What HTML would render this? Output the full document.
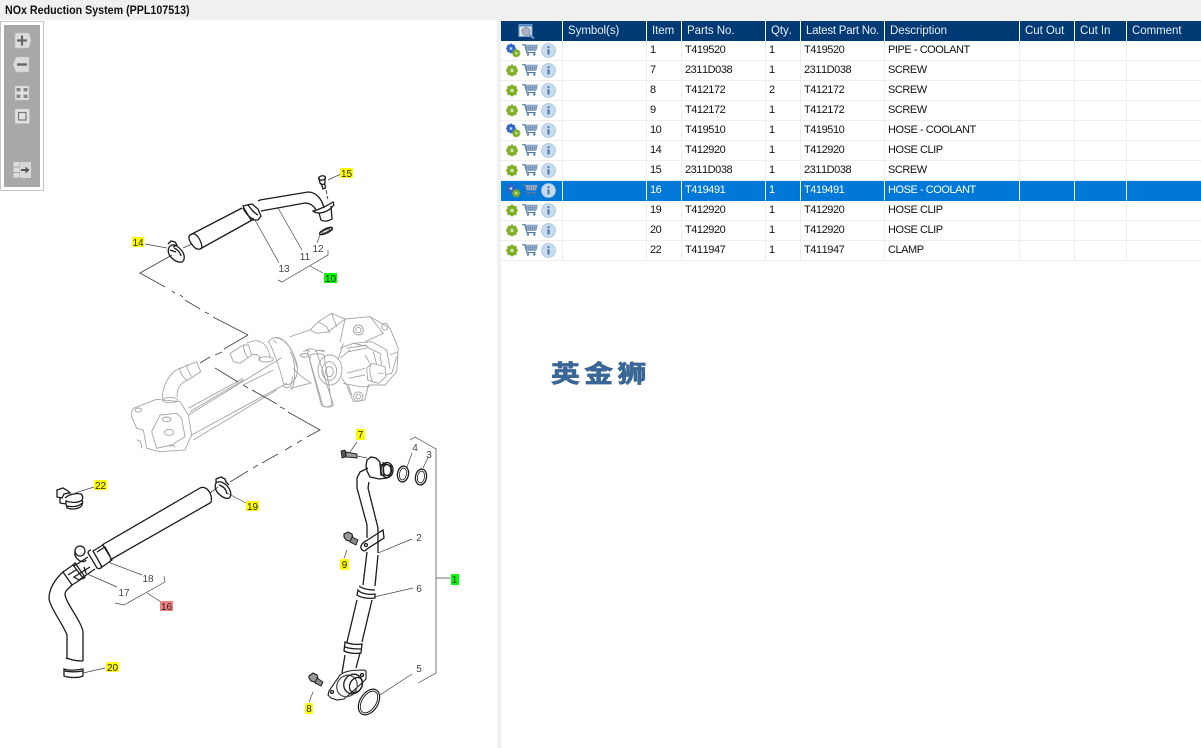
<!DOCTYPE html>
<html><head><meta charset="utf-8"><style>
html,body{margin:0;padding:0;width:1201px;height:748px;overflow:hidden;background:#fff;font-family:"Liberation Sans",sans-serif}
.abs{position:absolute}
#title{left:0;top:0;width:1201px;height:20px;background:#f0f0f0}
#title span{position:absolute;left:5px;top:0;font-weight:bold;font-size:12px;line-height:20px;color:#111;transform:scaleX(.89);transform-origin:left top;white-space:nowrap}
#div{left:497px;top:20px;width:4px;height:728px;background:#f0f0f0}
#top2{left:497px;top:20px;width:704px;height:1px;background:#f0f0f0}
table{position:absolute;left:501px;top:21px;width:700px;border-collapse:separate;border-spacing:0;table-layout:fixed;font-size:11px;letter-spacing:-.45px;font-kerning:none;color:#111}
th{height:20px;padding:0 0 0 5px;background:#003a75;color:#e8eef5;font-weight:normal;font-size:11.5px;letter-spacing:-.05px;text-align:left;border-right:1px solid #fff;box-sizing:border-box;line-height:20px;white-space:nowrap;overflow:hidden}
td{height:20px;padding:0 0 0 3px;border-right:1px solid #eee;border-bottom:1px solid #eee;box-sizing:border-box;white-space:nowrap;overflow:hidden;line-height:19px}
tr.s td{background:#0078d7;color:#fff;border-right-color:#fff;border-bottom-color:#0078d7}
td.i{padding:0;position:relative}
td.i svg{position:absolute;left:3px;top:0}
th:last-child,td:last-child{border-right:none}
#logo{left:551px;top:359px;font-family:"Liberation Sans","Noto Sans CJK SC",sans-serif;font-weight:bold;font-size:24px;line-height:32px;color:#3a6797;letter-spacing:3.7px;transform:scaleX(1.2);transform-origin:left top;-webkit-text-stroke:.7px #3a6797;white-space:nowrap}
</style></head><body>
<svg width="0" height="0" style="position:absolute"><defs>
<symbol id="cart" viewBox="0 0 18 16"><path d="M0 2.500h3l2.500 9h10" fill="none" stroke="#52779f" stroke-width="1.300"/><path d="M3.800 3h13.700l-1.600 6H5.400z" fill="#a9bed4" stroke="#6c8cb0" stroke-width=".8"/><path d="M7 3.500v5M9.500 3.500v5M12 3.500v5M14.500 3.500v5M4.500 5.500h12.500M5 7.500h11.500" stroke="#52779f" stroke-width=".5"/><circle cx="6.700" cy="13.700" r="1.400" fill="#52779f"/><circle cx="14" cy="13.700" r="1.400" fill="#52779f"/></symbol>
<symbol id="info" viewBox="0 0 15 15"><circle cx="7.500" cy="7.500" r="7" fill="#c8dcee" stroke="#a9c4dc" stroke-width=".8"/><rect x="6.400" y="6.300" width="2.200" height="5.200" fill="#4f7dab"/><rect x="6.400" y="3.200" width="2.200" height="2" fill="#4f7dab"/></symbol>
<symbol id="gear" viewBox="0 0 12 12"><circle cx="6" cy="6" r="3.700" fill="none" stroke="#7fae2a" stroke-width="3"/><path d="M6 .1v11.800M.1 6h11.800M1.800 1.800l8.400 8.400M10.200 1.800l-8.400 8.400" stroke="#7fae2a" stroke-width="2.200"/><circle cx="6" cy="6" r="1.700" fill="#d4e6a8"/></symbol>
<symbol id="bgear" viewBox="0 0 12 12"><circle cx="6" cy="6" r="3.700" fill="none" stroke="#2f66c8" stroke-width="3"/><path d="M6 .1v11.800M.1 6h11.800M1.800 1.800l8.400 8.400M10.200 1.800l-8.400 8.400" stroke="#2f66c8" stroke-width="2.200"/><circle cx="6" cy="6" r="1.700" fill="#bcd0f2"/></symbol>
<g id="ic1"><use href="#gear" x="2" y="3.500" width="12" height="12"/><use href="#cart" x="18" y="1.500" width="16" height="14"/><use href="#info" x="37" y="2" width="15" height="15"/></g>
<g id="ic2"><use href="#bgear" x="2" y="2.500" width="10" height="10"/><use href="#gear" x="8" y="8" width="8.500" height="8.500"/><use href="#cart" x="18" y="1.500" width="16" height="14"/><use href="#info" x="37" y="2" width="15" height="15"/></g>
</defs></svg>

<div id="title" class="abs"><span>NOx Reduction System (PPL107513)</span></div>
<div id="div" class="abs"></div><div id="top2" class="abs"></div>

<svg class="abs" style="left:0;top:20px" width="497" height="728" viewBox="0 20 497 728">
<!-- toolbar -->
<rect x="0.500" y="21.500" width="43" height="169" fill="#fff" stroke="#c4c4c4"/>
<rect x="4" y="25" width="36" height="162" fill="#a8a8a8"/>
<path d="M15 33h14l2 7.500-2 7.500H15z" fill="#dcdcdc" stroke="#bdbdbd" stroke-width=".6"/><path d="M22 35.500v10M17 40.500h10" stroke="#666" stroke-width="2.200"/>
<path d="M29 57H16l-3 7.500 3 7.500h13z" fill="#dcdcdc" stroke="#bdbdbd" stroke-width=".6"/><path d="M17 64.500h10" stroke="#666" stroke-width="2.400"/>
<rect x="15" y="86" width="14" height="14" fill="#e2e2e2" stroke="#bdbdbd" stroke-width=".6"/><path d="M16.500 88h4v3.500h-4zM23.500 88h4v3.500h-4zM16.500 94.500h4v3.500h-4zM23.500 94.500h4v3.500h-4z" fill="#888"/>
<rect x="15" y="109" width="14.500" height="14.500" fill="#e2e2e2" stroke="#bdbdbd" stroke-width=".6"/><rect x="18.500" y="112.500" width="7.500" height="7.500" fill="none" stroke="#777" stroke-width="1.200"/>
<rect x="13.500" y="162" width="6" height="4.500" fill="#ddd"/><rect x="13.500" y="167.500" width="6" height="4.500" fill="#ddd"/><rect x="13.500" y="173" width="6" height="4.500" fill="#ddd"/>
<rect x="20" y="162" width="11" height="16" fill="#d8d8d8"/><path d="M21 170h5" stroke="#555" stroke-width="2"/><path d="M25.500 166.500l4 3.500-4 3.500z" fill="#555"/>

<!-- engine left part, coordinates from 3x trace -->
<g transform="translate(120,300) scale(.33333)" fill="none" stroke="#a4a4a4" stroke-width="2.700">
<path d="M35 335l5-10 70-27 70 7 25 40 10 60-5 10-15 35-75 5-40-10-10-55-20-5-15-35z"/>
<path d="M120 345l50-5 15 15 10 55-40 25-45 10-15-50z"/>
<ellipse cx="55" cy="330" rx="10" ry="6"/><ellipse cx="140" cy="358" rx="13" ry="7"/><ellipse cx="147" cy="397" rx="14" ry="9"/>
<path d="M50 420c10 0 15 8 15 25M150 440c5-6 12-6 15 2"/>
<path d="M205 345l280-172M205 325l165-90M210 335l160-95M215 405l285-155M370 255l90-45M220 420l250-150"/>
<ellipse cx="150" cy="300" rx="22" ry="8"/>
<path d="M128 295c-3-35 22-80 52-90M172 292c-4-25 10-45 33-52"/>
<path d="M180 205l50-20 12 30-37 25c-10 2-25-20-25-35zM200 192c0 15 10 30 15 38"/>
<path d="M330 160l40-25 15 0 10 30-35 25-20-5zM370 135c0 15 10 35 15 40"/>
<path d="M380 130c30-15 60-10 70 40M395 165c15-5 25 0 25 15"/>
<ellipse cx="438" cy="178" rx="22" ry="8"/>
<path d="M445 125c25-30 65-5 85 65 10 40-15 75-40 60-5-30-35-115-45-125zM455 115c35-10 65 30 75 85M488 255c5 10 20 10 25 0l5-25"/>
<path d="M520 205c20 25 40 35 55 45M470 130l-10-10"/>
<path d="M560 150c5-5 25-5 30 5l50 160c-5 8-30 8-32 0L565 165zM550 155c5-5 15-5 20 0M585 155c5-5 15-5 25 0"/>
</g>
<!-- engine right part -->
<g transform="translate(290,305) scale(.33333)" fill="none" stroke="#a4a4a4" stroke-width="2.700">
<path d="M0 95l60-20 25-25 40-25 40 17 75-7 60 35 25 60-5 70-35 40-50 0-10 45-35 5-20-50-15-20"/>
<path d="M60 75l20 10 35-5 50-38M85 50l25 15 10 20M125 25l15 40M165 42l-15 70M240 35l40 50 -55 25"/>
<ellipse cx="120" cy="195" rx="36" ry="45"/><ellipse cx="118" cy="198" rx="22" ry="28"/><ellipse cx="118" cy="200" rx="12" ry="15"/>
<path d="M60 150c10-5 35-5 42 0l24 150c-8 8-25 8-32 0L60 170zM30 150c8-6 20-6 25 0 0 8-20 10-25 0zM75 140c8-6 25-6 30 0"/>
<path d="M0 140c15 20 20 80 5 115M0 250l60-15"/>
<circle cx="205" cy="75" r="15"/><circle cx="205" cy="75" r="8"/><circle cx="205" cy="275" r="14"/><circle cx="205" cy="275" r="7"/><circle cx="285" cy="65" r="10"/>
<path d="M150 130l40-15 55-5 45 25 10 55M160 115l-15 45M170 130l60-10M175 140l60-12 40 20M150 160l30-25M190 115l45 10"/>
<path d="M230 190l15-15 40 10 3 30-22 20-33-10zM245 175c-10 15-5 50 8 58M265 205h15M225 150l15 25M250 140l10 40M270 150l5 30"/>
<path d="M170 205l55-15M175 220l50-10M160 235l50 10 30 0M285 210l20-5 15-50M300 150l25-10"/>
<path d="M175 240l10 30M235 240l-5 20"/>
</g>

<!-- dash lines -->
<g fill="none" stroke="#444" stroke-width=".9">
<path d="M172 255l-32 18 25 14M172 291l3 2M180 295l3 2M185 300l15 9M205 312l4 2M213 317l35 18"/>
<path d="M248 335l-24 14M222 352l-7 3M210 357l-10 6"/>
<path d="M215 368l23 14M243 385l5 3M252 390l25 14M280 407l5 2M288 412l32 18-13 7M302 440l-5 3M292 446l-7 4M278 454l-16 9M258 465l-5 3M248 471l-18 11"/>
<path d="M183 248l9-4M210 493l8-6"/>
</g>

<!-- upper hose -->
<g fill="none" stroke="#1c1c1c" stroke-width="1.300">
<path d="M190 235l52-27M200 249l54-30"/>
<path d="M190 235c3-2 6-1 8 2 3 4 5 10 3 12M190 235c-2 2-1 5 1 8 3 5 6 7 9 6"/>
<path d="M243 206l9-2 6 5 3 7-3 4-7 0-6-10z"/>
<path d="M243 208c2 4 6 10 11 11M248 205c3 4 6 8 10 10"/>
<path d="M258 201l2-1 48-8c8 0 14 7 16 16M261 211l44-8c5 0 9 3 11 7"/>
<path d="M313 211c5-1 14-5 20-9 1 1 1 3 0 4-4 5-10 7-14 7-3 0-5-1-6-2z"/>
<path d="M319 213l2 7c3 2 8 1 11-1l-1-13"/>
<ellipse cx="322" cy="178" rx="3.500" ry="2.200" transform="rotate(-10 322 178)"/>
<path d="M319 178l1 5c1 2 4 2 5 0l0-5M321 183l2 6 2.500-1-1-5"/>
<path d="M326 190l1 4M327 196l1 3" stroke-width=".8"/>
<ellipse cx="326" cy="231" rx="7" ry="2.200" transform="rotate(-25 326 231)" stroke-width="1.500"/>
<ellipse cx="326" cy="231" rx="4.500" ry="1" transform="rotate(-25 326 231)" stroke-width=".7"/>
<!-- clamp 14 -->
<path d="M172 245c-4 1-5 7-2 11 3 4 8 7 12 6 3-2 3-7 0-11-3-4-7-7-10-6z"/>
<path d="M168 244l3-3 4 1 2 3-4 2M174 248c3 1 6 4 7 8M170 250l6 2"/>
</g>
<!-- leaders upper -->
<g fill="none" stroke="#444" stroke-width=".7">
<path d="M341 174l-13 6M145 244l22 4M278 208l24 42M255 220l24 43M320 235l-3 8M278 280l4 2 46-27 0-5M310 266l13 7"/>
</g>

<!-- lower-left -->
<g fill="none" stroke="#1c1c1c" stroke-width="1.300">
<path d="M102 545l98-57M110 560l100-57M200 488c4-2 8 1 10 5 2 4 2 9 0 10"/>
<path d="M93 551l10-6 9 15-10 7z"/><path d="M97 552l8-5 5 9"/>
<path d="M91 550c-2 0-3 2-3 3l9 15c2 1 5 1 4-2"/>
<path d="M88 557l-14 9M90 567l-16 10 5 3 16-11M84 567l2 6"/>
<circle cx="80" cy="551" r="5"/><path d="M75 552c-1 4 2 7 5 9 3 1 5 1 6-1"/>
<path d="M63 572l10-7 10 13-11 7z"/><path d="M73 565l2-2 10 14-2 2M68 575l8-5"/>
<path d="M64 571c-9 8-15 18-15 27 0 8 15 28 18 37v23l-1 1"/>
<path d="M72 585c-4 4-7 6-7 9 0 8 17 28 18 38v29"/>
<path d="M67 658c4 2 11 3 16 3"/>
<path d="M64 669c5 2 14 1 19 0l0 7c-4 2-14 2-19 0z"/><path d="M64 671c6 1 13 1 19 0"/>
<!-- clamp 22 -->
<path d="M57 490l6-2 5 3 2 2-6 1-2 4-5-1z"/><path d="M60 498v5l6 1 0-3c5 2 13 2 16-1 1-2 1-5-1-6-4-1-12 0-16 4M66 504l1 4c5 2 13 1 15-3 1-2 1-3 0-5M66 506c6 1 13 1 16-3"/>
<!-- clamp 19 -->
<path d="M216 483c-2 4 0 9 4 12 3 3 7 4 9 3 3-2 2-7-1-11-3-4-9-7-12-4z"/><path d="M216 483l-0-4 5-2 4 2 1 3 3 3M219 485c4 1 7 4 8 9"/>
</g>
<g fill="none" stroke="#444" stroke-width=".7">
<path d="M75 493l19-6M227 493l19 10M108 562l34 13M85 573l32 14M83 673l22-5"/>
<path d="M115 603l9 2 41-23-1-6M147 593l14 9"/>
</g>

<!-- right pipe -->
<g fill="none" stroke="#1c1c1c" stroke-width="1.300">
<path d="M368 468l-8 4-3 6v10l10 37v13M369 482l-1 6 10 40v25"/>
<path d="M367 552l-4 33M378 555l-3 31"/>
<path d="M366 541l17-11 1 8-17 11c-2 3-5 2-6-1-1-2 2-6 5-7z"/><circle cx="366" cy="545" r="1.500"/>
<path d="M358 590c3 4 12 5 17 4l0 4c-5 1-14 0-18-3zM359 586c4 3 11 4 16 4"/>
<path d="M357 600l-10 42M372 600l-10 42"/>
<path d="M345 642c4 2 12 3 17 2l-1 9c-5 1-13 0-17-2zM345 647c5 2 12 2 16 2"/>
<path d="M345 655l-3 18M360 653l-4 15"/>
<path d="M328 695l1-4 11-16c5-4 12-5 24-5l2 1 0 8-4 4-18 16-7 1-6-2z" stroke-width="1.100"/>
<circle cx="332" cy="692" r="1.500"/><circle cx="362" cy="675" r="1.500"/>
<ellipse cx="347" cy="686" rx="10" ry="11" transform="rotate(30 347 686)" stroke="#555"/>
<ellipse cx="353" cy="684" rx="9" ry="10" transform="rotate(30 353 684)"/>
<ellipse cx="356" cy="685" rx="6" ry="8" transform="rotate(30 356 685)"/>
<ellipse cx="369" cy="702" rx="9" ry="14" transform="rotate(32 369 702)" stroke-width="1.200"/>
<ellipse cx="369" cy="702" rx="7" ry="12" transform="rotate(32 369 702)" stroke-width=".9"/>
<!-- top fitting -->
<path d="M367 460l4-3 5 1 4 4 0 3 6-1 5 2 1 8-5 4-8 1-4-1-5-1-3-6-1-5z"/>
<ellipse cx="387" cy="470" rx="6" ry="7.500"/><ellipse cx="387" cy="470" rx="4" ry="5.500"/>
<path d="M380 463l1 13M383 462l1 14"/>
<ellipse cx="403" cy="474" rx="5.500" ry="8" transform="rotate(10 403 474)"/><ellipse cx="403" cy="474" rx="3.500" ry="6" transform="rotate(10 403 474)" stroke-width=".8"/>
<ellipse cx="421" cy="477" rx="5.500" ry="8" transform="rotate(10 421 477)"/><ellipse cx="421" cy="477" rx="3.500" ry="6" transform="rotate(10 421 477)" stroke-width=".8"/>
<!-- bolts -->
<path d="M341 451l4-1 1 7-4 1z" fill="#555" stroke-width=".8"/><path d="M346 452l11 2 0 4-11-1z" fill="#999" stroke-width=".9"/>
<path d="M344 534l4-2 4 2 1 4-3 3-4-1-2-3z" fill="#999" stroke-width="1.100"/><path d="M352 537l6 3-2 5-6-3z" fill="#888" stroke-width=".9"/>
<path d="M309 676l4-3 4 2 1 4-3 3-4-1-2-3z" fill="#999" stroke-width="1.100"/><path d="M317 678l6 4-2 4-6-3z" fill="#888" stroke-width=".9"/>
</g>
<g fill="none" stroke="#444" stroke-width=".7">
<path d="M350 452l7-10M357 456l10 2M347 550l-3 8M407 467l5-14M423 468l5-10M378 553l34-14M374 597l39-9M380 695l32-21M313 692l-4 10"/>
<path d="M410 440l5-3 21 12v224l-18 10M436 578h14"/>
</g>

<!-- labels -->
<g font-size="10" font-family="Liberation Sans,sans-serif" fill="#222" text-anchor="middle">
<rect x="340" y="168" width="13" height="10" fill="#ffff00"/><text x="346.500" y="177">15</text>
<rect x="132" y="237" width="12" height="10" fill="#ffff00"/><text x="138" y="246">14</text>
<rect x="324" y="273" width="13" height="10" fill="#00ff00"/><text x="330.500" y="282">10</text>
<rect x="356" y="429" width="9" height="11" fill="#ffff00"/><text x="360.500" y="438">7</text>
<rect x="94" y="480" width="13" height="10" fill="#ffff00"/><text x="100.500" y="489">22</text>
<rect x="246" y="501" width="13" height="10" fill="#ffff00"/><text x="252.500" y="510">19</text>
<rect x="340" y="559" width="9" height="11" fill="#ffff00"/><text x="344.500" y="568">9</text>
<rect x="451" y="574" width="8" height="11" fill="#00ff00"/><text x="454.500" y="583">1</text>
<rect x="160" y="601" width="13" height="10" fill="#f58080"/><text x="166.500" y="610">16</text>
<rect x="106" y="662" width="13" height="10" fill="#ffff00"/><text x="112.500" y="671">20</text>
<rect x="305" y="703" width="8" height="11" fill="#ffff00"/><text x="309" y="712">8</text>
<g fill="#444"><text x="305" y="260">11</text><text x="318" y="252">12</text><text x="284" y="272">13</text><text x="415" y="451">4</text><text x="429" y="458">3</text><text x="419" y="541">2</text><text x="419" y="592">6</text><text x="419" y="672">5</text><text x="148" y="582">18</text><text x="124" y="596">17</text></g>
</g>
</svg>

<table>
<colgroup><col style="width:62px"><col style="width:84px"><col style="width:35px"><col style="width:84px"><col style="width:35px"><col style="width:84px"><col style="width:135px"><col style="width:55px"><col style="width:52px"><col style="width:74px"></colgroup>
<tr><th style="padding:0;position:relative"><svg style="position:absolute;left:17px;top:3px" width="18" height="16" viewBox="0 0 18 16"><rect x="1" y="0.500" width="13" height="12" fill="#dbe6f0" stroke="#7ea6cc"/><rect x="1" y="0.500" width="13" height="2" fill="#4f8ac2"/><circle cx="8" cy="7.500" r="4" fill="#aab6c2" stroke="#8796a6"/><path d="M11 10.500l5 4" stroke="#6d9cc8" stroke-width="2"/></svg></th><th>Symbol(s)</th><th>Item</th><th>Parts No.</th><th>Qty.</th><th style="letter-spacing:-.25px">Latest Part No.</th><th>Description</th><th>Cut Out</th><th>Cut In</th><th>Comment</th></tr>
<tr><td class="i"><svg width="58" height="19"><use href="#ic2"/></svg></td><td></td><td>1</td><td>T419520</td><td>1</td><td>T419520</td><td>PIPE - COOLANT</td><td></td><td></td><td></td></tr>
<tr><td class="i"><svg width="58" height="19"><use href="#ic1"/></svg></td><td></td><td>7</td><td>2311D038</td><td>1</td><td>2311D038</td><td>SCREW</td><td></td><td></td><td></td></tr>
<tr><td class="i"><svg width="58" height="19"><use href="#ic1"/></svg></td><td></td><td>8</td><td>T412172</td><td>2</td><td>T412172</td><td>SCREW</td><td></td><td></td><td></td></tr>
<tr><td class="i"><svg width="58" height="19"><use href="#ic1"/></svg></td><td></td><td>9</td><td>T412172</td><td>1</td><td>T412172</td><td>SCREW</td><td></td><td></td><td></td></tr>
<tr><td class="i"><svg width="58" height="19"><use href="#ic2"/></svg></td><td></td><td>10</td><td>T419510</td><td>1</td><td>T419510</td><td>HOSE - COOLANT</td><td></td><td></td><td></td></tr>
<tr><td class="i"><svg width="58" height="19"><use href="#ic1"/></svg></td><td></td><td>14</td><td>T412920</td><td>1</td><td>T412920</td><td>HOSE CLIP</td><td></td><td></td><td></td></tr>
<tr><td class="i"><svg width="58" height="19"><use href="#ic1"/></svg></td><td></td><td>15</td><td>2311D038</td><td>1</td><td>2311D038</td><td>SCREW</td><td></td><td></td><td></td></tr>
<tr class="s"><td class="i"><svg width="58" height="19"><use href="#ic2"/></svg></td><td></td><td>16</td><td>T419491</td><td>1</td><td>T419491</td><td>HOSE - COOLANT</td><td></td><td></td><td></td></tr>
<tr><td class="i"><svg width="58" height="19"><use href="#ic1"/></svg></td><td></td><td>19</td><td>T412920</td><td>1</td><td>T412920</td><td>HOSE CLIP</td><td></td><td></td><td></td></tr>
<tr><td class="i"><svg width="58" height="19"><use href="#ic1"/></svg></td><td></td><td>20</td><td>T412920</td><td>1</td><td>T412920</td><td>HOSE CLIP</td><td></td><td></td><td></td></tr>
<tr><td class="i"><svg width="58" height="19"><use href="#ic1"/></svg></td><td></td><td>22</td><td>T411947</td><td>1</td><td>T411947</td><td>CLAMP</td><td></td><td></td><td></td></tr>
</table>
<div id="logo" class="abs">英金狮</div>
</body></html>
